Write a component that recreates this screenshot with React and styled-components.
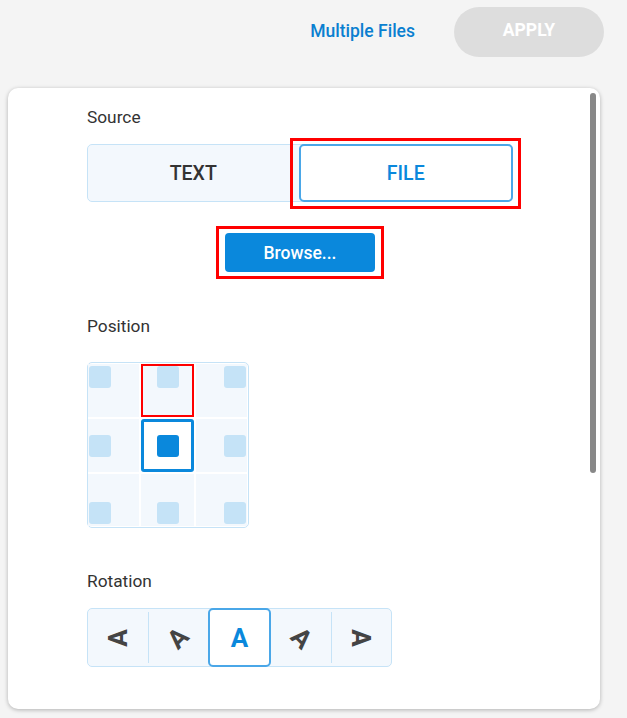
import React from "react";
import styled, { createGlobalStyle, css } from "styled-components";

const GlobalStyle = createGlobalStyle`
  html, body {
    margin: 0;
    padding: 0;
    background: #f4f4f4;
    font-family: Roboto, "Liberation Sans", sans-serif;
  }
`;

const Page = styled.div`
  width: 627px;
  height: 718px;
  overflow: hidden;
`;

const Header = styled.div`
  display: flex;
  justify-content: flex-end;
  align-items: center;
  height: 50px;
  padding: 7px 23px 0 0;
  gap: 39px;
`;

const LinkText = styled.a`
  color: #0a7fd0;
  font-size: 17.5px;
  font-weight: 500;
  text-decoration: none;
  margin-top: -2px;
`;

const ApplyButton = styled.button`
  width: 150px;
  height: 50px;
  border: none;
  border-radius: 25px;
  background: #dddddd;
  color: #ffffff;
  font-family: inherit;
  font-size: 17.5px;
  font-weight: 700;
  padding: 0 0 4px;
`;

const Card = styled.div`
  position: relative;
  margin: 31px 0 0 8px;
  width: 592px;
  height: 621px;
  background: #ffffff;
  border-radius: 10px;
  box-shadow: 0 1px 4px rgba(0, 0, 0, 0.28);
  overflow: hidden;
`;

const ScrollThumb = styled.div`
  position: absolute;
  top: 5px;
  right: 4px;
  width: 6px;
  height: 380px;
  border-radius: 3px;
  background: #888888;
`;

const Content = styled.div`
  padding: 19px 0 0 79px;
  width: 426px;
`;

const Label = styled.div`
  font-size: 17.3px;
  line-height: 20px;
  color: #333333;
  margin-bottom: ${(p) => p.$gap || 17}px;
`;

const Toggle = styled.div`
  display: flex;
  height: 58px;
  box-sizing: border-box;
  border: 1px solid #c6e3f7;
  border-radius: 5px;
  background: #f3f8fd;
`;

const ToggleOption = styled.div`
  position: relative;
  flex: 1;
  display: flex;
  align-items: center;
  justify-content: center;
  font-size: 19.5px;
  font-weight: 500;
  color: #333333;
  box-sizing: border-box;
  border-radius: 5px;
  ${(p) =>
    p.$active &&
    css`
      margin: -1px -1px -1px 0;
      background: #ffffff;
      border: 2px solid #4aa7e8;
      color: #0a88dc;
      &::after {
        content: "";
        position: absolute;
        top: -8px;
        left: -11px;
        right: -10px;
        bottom: -9px;
        border: 3px solid #ff0000;
        pointer-events: none;
      }
    `}
`;

const BrowseRow = styled.div`
  display: flex;
  justify-content: center;
  margin-top: 24px;
`;

const RedFrame = styled.div`
  border: 3px solid #ff0000;
  padding: 4px 6px;
`;

const BrowseButton = styled.button`
  width: 150px;
  height: 39px;
  border: none;
  border-radius: 4px;
  background: #0a88dc;
  color: #ffffff;
  font-family: inherit;
  font-size: 17.5px;
  font-weight: 500;
  display: block;
`;

const Section = styled.div`
  margin-top: ${(p) => p.$top}px;
`;

const Grid = styled.div`
  display: grid;
  grid-template-columns: 51px 53px 51px;
  grid-template-rows: 53px 53px 52px;
  gap: 2px;
  width: 162px;
  box-sizing: border-box;
  padding: 1px 1px 1px 0;
  border: 1px solid #c6e3f7;
  border-radius: 5px;
  background: #ffffff;
`;

const Cell = styled.div`
  display: flex;
  box-sizing: border-box;
  padding: 2px 1px;
  background: #f3f8fd;
  justify-content: ${(p) => p.$h};
  align-items: ${(p) => p.$v};
  ${(p) =>
    p.$marked &&
    css`
      border: 2px solid #ff0000;
      padding: 0;
    `}
  ${(p) =>
    p.$active &&
    css`
      background: #ffffff;
      border: 3px solid #0a88dc;
      border-radius: 3px;
      padding: 0;
    `}
`;

const Dot = styled.div`
  width: 22px;
  height: 22px;
  border-radius: 3px;
  background: ${(p) => (p.$active ? "#0a88dc" : "#c5e3f7")};
`;

const RotationGroup = styled.div`
  display: flex;
  width: 305px;
  height: 59px;
  box-sizing: border-box;
  border: 1px solid #c6e3f7;
  border-radius: 5px;
  background: #f3f8fd;
`;

const RotationOption = styled.div`
  flex: 1;
  display: flex;
  align-items: center;
  justify-content: center;
  box-sizing: border-box;
  position: relative;
  & + &::before {
    content: "";
    position: absolute;
    left: 0;
    top: 3px;
    bottom: 3px;
    width: 1px;
    background: #c6e3f7;
  }
  ${(p) =>
    p.$active &&
    css`
      margin: -1px 0;
      background: #ffffff;
      border: 2px solid #4aa7e8;
      border-radius: 5px;
      &::before,
      & + &::before {
        display: none;
      }
    `}
`;

const Glyph = styled.span`
  display: inline-block;
  font-size: 26px;
  font-weight: 700;
  line-height: 1;
  color: ${(p) => (p.$active ? "#0a88dc" : "#444444")};
  transform: rotate(${(p) => p.$deg}deg);
`;

const cells = [
  ["flex-start", "flex-start"],
  ["center", "flex-start"],
  ["flex-end", "flex-start"],
  ["flex-start", "center"],
  ["center", "center"],
  ["flex-end", "center"],
  ["flex-start", "flex-end"],
  ["center", "flex-end"],
  ["flex-end", "flex-end"],
];

const rotations = [-90, -45, 0, 45, 90];

export default function App() {
  return (
    <Page>
      <GlobalStyle />
      <Header>
        <LinkText href="#">Multiple Files</LinkText>
        <ApplyButton>APPLY</ApplyButton>
      </Header>
      <Card>
        <ScrollThumb />
        <Content>
          <Label>Source</Label>
          <Toggle>
            <ToggleOption>TEXT</ToggleOption>
            <ToggleOption $active>FILE</ToggleOption>
          </Toggle>
          <BrowseRow>
            <RedFrame>
              <BrowseButton>Browse...</BrowseButton>
            </RedFrame>
          </BrowseRow>
          <Section $top={37}>
            <Label $gap={26}>Position</Label>
            <Grid>
              {cells.map(([h, v], i) => (
                <Cell key={i} $h={h} $v={v} $marked={i === 1} $active={i === 4}>
                  <Dot $active={i === 4} />
                </Cell>
              ))}
            </Grid>
          </Section>
          <Section $top={43}>
            <Label>Rotation</Label>
            <RotationGroup>
              {rotations.map((deg) => (
                <RotationOption key={deg} $active={deg === 0}>
                  <Glyph $deg={deg} $active={deg === 0}>
                    A
                  </Glyph>
                </RotationOption>
              ))}
            </RotationGroup>
          </Section>
        </Content>
      </Card>
    </Page>
  );
}
